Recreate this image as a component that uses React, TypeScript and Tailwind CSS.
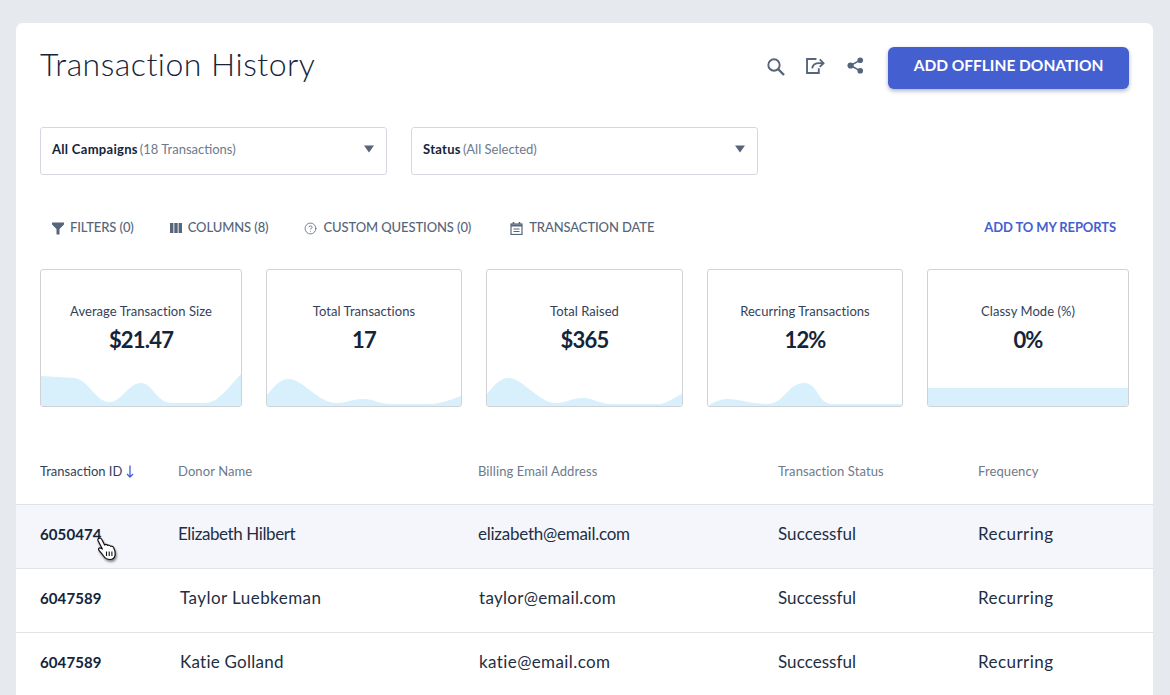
import { CircleHelp } from "lucide-react";

const font = { fontFamily: "Lato, sans-serif" };

const stats = [
  {
    label: "Average Transaction Size",
    value: "$21.47",
    width: "w-[202px]",
    box: "0 0 202 36",
    path: "M0 6 C12 7 22 7 33 8 C48 9 55 32 69 32 C82 32 88 13 101 13 C113 13 116 33 133 33 L165 33 C180 33 190 16 202 4 V36 H0 Z",
  },
  {
    label: "Total Transactions",
    value: "17",
    width: "w-[196px]",
    box: "0 0 196 36",
    path: "M0 25 C8 15 14 9 22 9 C36 9 52 33 70 33 C80 33 86 29 97 29 C108 29 112 34 127 34 L163 34 C175 34 185 30 196 26 V36 H0 Z",
  },
  {
    label: "Total Raised",
    value: "$365",
    width: "w-[197px]",
    box: "0 0 197 36",
    path: "M0 24 C8 14 14 8 22 8 C36 8 52 33 70 33 C80 33 86 28 97 28 C108 28 112 34 127 34 L175 34 C182 33 190 27 197 24 V36 H0 Z",
  },
  {
    label: "Recurring Transactions",
    value: "12%",
    width: "w-[196px]",
    box: "0 0 196 36",
    path: "M0 36 C6 32 12 29 19 29 C32 29 44 34 59 34 C78 34 80 13 97 13 C112 13 110 34 126 34 L196 34 V36 H0 Z",
  },
  {
    label: "Classy Mode (%)",
    value: "0%",
    width: "w-[202px]",
    box: "0 0 202 36",
    path: "M0 18 H202 V36 H0 Z",
  },
];

const rows = [
  { id: "6050474", name: "Elizabeth Hilbert", email: "elizabeth@email.com", hover: true, nameClass: "tracking-[-0.4px]", emailClass: "tracking-[-0.25px]" },
  { id: "6047589", name: "Taylor Luebkeman", email: "taylor@email.com", hover: false, nameClass: "pl-[2px] tracking-[0.45px]", emailClass: "pl-[1px] tracking-[0.3px]" },
  { id: "6047589", name: "Katie Golland", email: "katie@email.com", hover: false, nameClass: "pl-[2px] tracking-[0.25px]", emailClass: "pl-[1px] tracking-[0.4px]" },
];

function ToolbarItem({ icon, label }: { icon: React.ReactNode; label: string }) {
  return (
    <div className="flex items-center gap-[6px] text-[13px] text-[#56657a] font-medium tracking-[-0.1px]">
      {icon}
      <span>{label}</span>
    </div>
  );
}

function Select({ title, note }: { title: string; note: string }) {
  return (
    <div className="w-[347px] h-[48px] border border-[#d5d9df] rounded-[3px] flex items-center px-[11px] pb-[2px]">
      <span className="text-[13px] font-bold tracking-[0.3px] text-[#14243a]">{title}</span>
      <span className="text-[13px] text-[#6d7a8c] ml-[2px]">{note}</span>
      <svg width="12" height="8" viewBox="0 0 12 8" className="ml-auto mb-[2px]">
        <path d="M1 0.5 H11 L6 7.5 Z" fill="#56657a" />
      </svg>
    </div>
  );
}

function Row({ id, name, email, hover, nameClass, emailClass }: (typeof rows)[number]) {
  return (
    <div className={`relative flex items-center h-[64px] pl-[24px] pb-[5px] border-b border-[#dfe2e6] text-[17px] text-[#1e2e44] ${hover ? "bg-[#f4f6fb]" : "bg-white"}`}>
      <div className="w-[138px] text-[15px] font-bold tracking-[0.1px] text-[#14243a]">{id}</div>
      <div className={`w-[300px] ${nameClass}`}>{name}</div>
      <div className={`w-[300px] ${emailClass}`}>{email}</div>
      <div className="w-[200px] tracking-[0.05px]">Successful</div>
      <div className="tracking-[0.45px]">Recurring</div>
      {hover && (
        <svg width="24" height="26" viewBox="0 0 24 26" className="absolute left-[79px] top-[31px] drop-shadow-[1px_2px_1px_rgba(0,0,0,0.45)]">
          <path
            d="M3.5 2.5 C5 1.5 6.3 2.3 7 3.8 L9.6 9 C10.6 8 12 8.4 12.6 9.4 C13.6 8.8 15 9.2 15.6 10.3 C16.6 9.9 18 10.4 18.6 11.6 C20 14.5 20.6 17 20 19.6 C19.4 22 17.6 23.5 15 23.5 C12 23.5 10.2 22.4 8.6 20 C7.2 18 5.6 16 4 14.3 C3 13.2 3.8 11.6 5.4 12 L7.4 13 L3.2 5 C2.7 4 2.8 3 3.5 2.5 Z"
            fill="#fff"
            stroke="#111"
            strokeWidth="1.2"
            strokeLinejoin="round"
          />
          <path d="M11.5 15.5 V20 M14.2 15.5 V20 M16.9 15.5 V20" stroke="#111" strokeWidth="1.1" />
        </svg>
      )}
    </div>
  );
}

export default function App() {
  return (
    <div className="h-[695px] overflow-hidden bg-[#e6eaee] pt-[23px] pl-[16px] pr-[17px]" style={font}>
      <div className="h-[700px] bg-white rounded-t-[7px] overflow-hidden">
        {/* Header */}
        <div className="flex items-start justify-between pt-[24px] px-[24px]">
          <h1 className="text-[32px] leading-[34px] tracking-[0.5px] text-[#14243a] font-light">Transaction History</h1>
          <div className="flex items-center">
            <svg width="18" height="18" viewBox="0 0 18 18" className="mr-[21px] mb-[3px]" fill="none" stroke="#56657a">
              <circle cx="7" cy="7" r="5.7" strokeWidth="1.9" />
              <path d="M11 11 L17 17" strokeWidth="2.4" />
            </svg>
            <svg width="19" height="16" viewBox="0 0 20 17" className="mr-[22px] mb-[5px]" fill="none" stroke="#56657a" strokeWidth="2">
              <path d="M13.5 11 V16 H1 V1 H11" />
              <path d="M6.5 11 C7 7.5 10 5.5 14 5.5 H18" />
              <path d="M14.5 1.5 L18.5 5.5 L14.5 9.5" />
            </svg>
            <svg width="17" height="17" viewBox="0 0 18 18" className="mr-[24px] mb-[5px]" fill="#56657a">
              <circle cx="3.8" cy="9" r="3.3" />
              <circle cx="14" cy="3.4" r="3" />
              <circle cx="14" cy="14.6" r="3" />
              <path d="M3.8 9 L14 3.4 M3.8 9 L14 14.6" stroke="#56657a" strokeWidth="1.6" />
            </svg>
            <button className="w-[241px] h-[42px] rounded-[6px] bg-[#445fd0] text-white text-[15.5px] font-bold pb-[5px] shadow-[0_2px_4px_rgba(30,40,80,0.35)]">
              ADD OFFLINE DONATION
            </button>
          </div>
        </div>

        {/* Dropdowns */}
        <div className="flex gap-[24px] pl-[24px] mt-[38px]">
          <Select title="All Campaigns" note="(18 Transactions)" />
          <Select title="Status" note="(All Selected)" />
        </div>

        {/* Toolbar */}
        <div className="flex items-center pl-[36px] pr-[37px] mt-[44px] h-[18px]">
          <div className="flex items-center gap-[36px]">
            <ToolbarItem
              label="FILTERS (0)"
              icon={
                <svg width="12" height="13" viewBox="0 0 12 13">
                  <path d="M0 0.5 H12 V2.5 L7.5 7 V12.5 L4.5 12.5 V7 L0 2.5 Z" fill="#56657a" />
                </svg>
              }
            />
            <ToolbarItem
              label="COLUMNS (8)"
              icon={
                <svg width="12" height="10" viewBox="0 0 12 10" fill="#56657a">
                  <rect x="0" y="0" width="3.4" height="10" />
                  <rect x="4.3" y="0" width="3.4" height="10" />
                  <rect x="8.6" y="0" width="3.4" height="10" />
                </svg>
              }
            />
            <ToolbarItem label="CUSTOM QUESTIONS (0)" icon={<CircleHelp size={13} strokeWidth={1.5} />} />
            <div className="ml-[3px]">
              <ToolbarItem
                label="TRANSACTION DATE"
                icon={
                  <svg width="13" height="13" viewBox="0 0 13 13" fill="none" stroke="#56657a">
                    <rect x="1" y="2" width="11" height="10.5" strokeWidth="1.2" />
                    <path d="M1 3.5 H12" strokeWidth="2.2" />
                    <path d="M3.5 0 V2 M9.5 0 V2" strokeWidth="1.6" />
                    <path d="M3.5 7 H9.5 M3.5 9.5 H9.5" strokeWidth="1" />
                  </svg>
                }
              />
            </div>
          </div>
          <div className="ml-auto text-[13px] font-bold text-[#445fd0] tracking-[-0.1px]">ADD TO MY REPORTS</div>
        </div>

        {/* Stat cards */}
        <div className="flex gap-[24px] pl-[24px] mt-[32px]">
          {stats.map((s) => (
            <div key={s.label} className={`${s.width} h-[138px] border border-[#cfd2d6] rounded-[3px] flex flex-col items-center overflow-hidden`}>
              <div className="mt-[33px] text-[13px] leading-[16px] tracking-[0.05px] text-[#33425a]">{s.label}</div>
              <div className="mt-[6px] text-[22px] leading-[30px] font-bold tracking-[-0.8px] text-[#14243a]">{s.value}</div>
              <svg viewBox={s.box} className="mt-auto w-full h-[36px] block" preserveAspectRatio="none">
                <path d={s.path} fill="#d7f0fc" />
              </svg>
            </div>
          ))}
        </div>

        {/* Table */}
        <div className="flex items-center h-[98px] pt-[32px] pl-[24px] border-b border-[#dfe2e6] text-[13px] tracking-[0.1px] text-[#6d7a8c]">
          <div className="w-[138px] flex items-center gap-[4px] tracking-normal text-[#33425a]">
            Transaction ID
            <svg width="8" height="13" viewBox="0 0 8 13" fill="none" stroke="#445fd0" strokeWidth="1.3">
              <path d="M4 0.5 V12 M1 9 L4 12 L7 9" />
            </svg>
          </div>
          <div className="w-[300px]">Donor Name</div>
          <div className="w-[300px]">Billing Email Address</div>
          <div className="w-[200px]">Transaction Status</div>
          <div>Frequency</div>
        </div>
        {rows.map((r) => (
          <Row key={r.email} {...r} />
        ))}
      </div>
    </div>
  );
}
